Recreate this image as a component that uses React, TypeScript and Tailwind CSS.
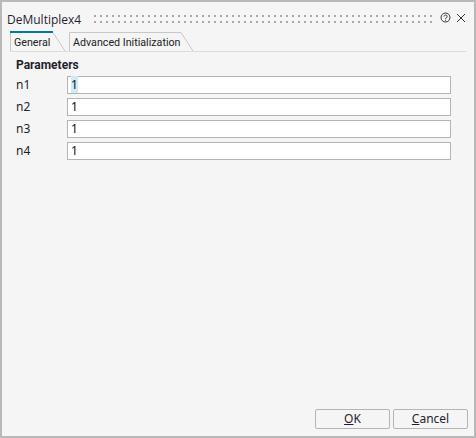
import React from "react";

const rows = ["n1", "n2", "n3", "n4"];

function Tab({ label, width, active }: { label: string; width: number; active?: boolean }) {
  const h = 20;
  return (
    <div className={active ? "relative h-[20px]" : "relative h-[20px] ml-[3px]"} style={{ width }}>
      <svg className="absolute inset-0" width={width} height={h}>
        <path d={`M0.5 ${h} V1.5 H${width - 13} L${width - 1} ${h}`} fill="#f5f5f5" stroke="#c8c8c8" />
        {active && <path d={`M0 1 H${width - 13}`} stroke="#0079a5" strokeWidth="2" />}
      </svg>
      <span className="relative block pl-[4px] pt-[4px] text-[10.7px] leading-[16px] text-[#222] whitespace-nowrap font-['Roboto',sans-serif]">
        {label}
      </span>
    </div>
  );
}

export default function App() {
  return (
    <div className="w-[476px] h-[438px] flex flex-col bg-[#f5f5f5] border-2 border-[#b9b9b9] font-['Noto_Sans',sans-serif] text-[#1f1f2e] overflow-hidden">
      {/* title bar */}
      <div className="flex items-center h-[27px] pl-[5px] pr-[8px] pt-[8px]">
        <span className="text-[12px] leading-[16px] w-[90px] font-['Open_Sans',sans-serif] whitespace-nowrap">DeMultiplex4</span>
        <svg width="340" height="8" className="shrink-0 -mt-[2px]">
          <defs>
            <pattern id="grip" width="6" height="6" patternUnits="userSpaceOnUse">
              <rect width="2" height="2" fill="#a8a8a8" />
            </pattern>
          </defs>
          <rect width="340" height="8" fill="url(#grip)" />
        </svg>
        <svg width="12" height="12" viewBox="0 0 12 12" className="ml-[6px] shrink-0 -mt-[3px]" fill="none" stroke="#333">
          <circle cx="5.5" cy="5.5" r="4.5" />
          <path d="M4 4.5 C4 2.5 7.2 2.5 7.2 4.5 C7.2 5.7 5.5 5.5 5.5 7" />
          <path d="M5.5 7.8 V8.8" />
        </svg>
        <svg width="10" height="10" viewBox="0 0 10 10" className="ml-[4px] shrink-0 -mt-[3px]" fill="none" stroke="#333">
          <path d="M1 1 L9 9 M9 1 L1 9" />
        </svg>
      </div>

      {/* tabs */}
      <div className="flex items-end h-[23px] ml-[8px] mr-[8px] border-b border-[#dcdcdc]">
        <Tab label="General" width={56} active />
        <Tab label="Advanced Initialization" width={125} />
      </div>

      {/* parameters */}
      <div className="flex-1 pl-[14px] pr-[23px] pt-[5px]">
        <div className="font-bold text-[12px] leading-[16px] mb-[3px] font-['Roboto',sans-serif]">Parameters</div>
        <div className="flex flex-col gap-[4px]">
          {rows.map((r) => (
            <div key={r} className="flex items-center h-[18px]">
              <span className="w-[51px] text-[12px]">{r}</span>
              <div className="flex-1 h-[18px] bg-white border border-[#b4b4b4] pl-[3px] text-[12px] leading-[15px] text-[#111]">
                <span className={r === "n1" ? "bg-[#cdeaf5]" : ""}>1</span>
              </div>
            </div>
          ))}
        </div>
      </div>

      {/* footer */}
      <div className="flex justify-end gap-[3px] pr-[6px] pb-[7px]">
        <button className="w-[75px] h-[20px] bg-[#f5f5f5] border border-[#b4b4b4] rounded-[2px] text-[12px] leading-[16px]">
          <span className="underline">O</span>K
        </button>
        <button className="w-[75px] h-[20px] bg-[#f5f5f5] border border-[#b4b4b4] rounded-[2px] text-[12px] leading-[16px]">
          <span className="underline">C</span>ancel
        </button>
      </div>
    </div>
  );
}
